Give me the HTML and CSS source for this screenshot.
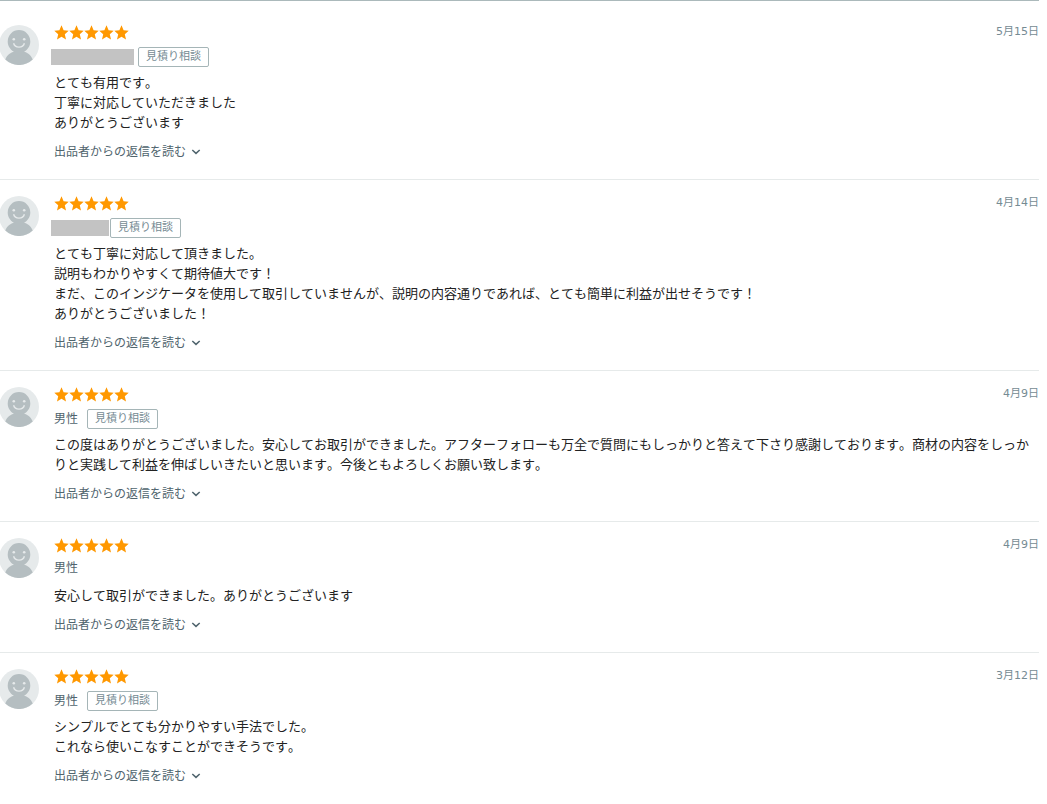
FILE: index.html
```
<!DOCTYPE html>
<html lang="ja">
<head>
<meta charset="utf-8">
<title>評価・感想</title>
<link rel="stylesheet" href="styles.css">
</head>
<body>
<svg class="sprite" aria-hidden="true">
  <symbol id="avatar" viewBox="0 0 40 40">
    <circle cx="20" cy="20" r="20" fill="#e6eaeb"/>
    <path d="M6.300 34.600C8.200 29.500 12 27.600 15 26.600C11.300 24.600 8.700 21 8.700 16.400a11.300 11.300 0 0 1 22.600 0C31.300 21 28.700 24.600 25 26.600C28 27.600 31.800 29.500 33.700 34.600A20 20 0 0 1 6.300 34.600Z" fill="#b5bec1"/>
    <circle cx="14.800" cy="14.300" r="1.300" fill="#e6eaeb"/>
    <circle cx="25.200" cy="14.300" r="1.300" fill="#e6eaeb"/>
    <path d="M14.600 18.200c.8 2.700 2.800 3.900 5.400 3.900s4.600-1.200 5.400-3.900" fill="none" stroke="#e6eaeb" stroke-width="1.400"/>
  </symbol>
  <symbol id="stars" viewBox="0 0 75 15">
    <g fill="#ff9800">
      <path id="star" d="M7.500 .3 9.600 5.300 14.700 5.700 10.800 9.200 12 14.500 7.500 11.700 3 14.500 4.200 9.200 .3 5.700 5.400 5.300Z"/>
      <use href="#star" x="15"/><use href="#star" x="30"/><use href="#star" x="45"/><use href="#star" x="60"/>
    </g>
  </symbol>
  <symbol id="chevron" viewBox="0 0 10 6">
    <path d="M1.300 1 5 4.400 8.700 1" fill="none" stroke="currentColor" stroke-width="1.500"/>
  </symbol>
</svg>
<main class="reviews">
  <article class="review">
    <svg class="avatar" aria-hidden="true"><use href="#avatar"/></svg>
    <div class="content">
      <header class="top"><svg class="stars" role="img" aria-label="星5つ"><use href="#stars"/></svg><time class="date">5月15日</time></header>
      <div class="meta"><span class="mask mask-long"></span><span class="badge">見積り相談</span></div>
      <p class="text">とても有用です。<br>丁寧に対応していただきました<br>ありがとうございます</p>
      <button class="reply" type="button">出品者からの返信を読む<svg class="chevron" aria-hidden="true"><use href="#chevron"/></svg></button>
    </div>
  </article>
  <article class="review">
    <svg class="avatar" aria-hidden="true"><use href="#avatar"/></svg>
    <div class="content">
      <header class="top"><svg class="stars" role="img" aria-label="星5つ"><use href="#stars"/></svg><time class="date">4月14日</time></header>
      <div class="meta"><span class="mask mask-short"></span><span class="badge">見積り相談</span></div>
      <p class="text">とても丁寧に対応して頂きました。<br>説明もわかりやすくて期待値大です！<br>まだ、このインジケータを使用して取引していませんが、説明の内容通りであれば、とても簡単に利益が出せそうです！<br>ありがとうございました！</p>
      <button class="reply" type="button">出品者からの返信を読む<svg class="chevron" aria-hidden="true"><use href="#chevron"/></svg></button>
    </div>
  </article>
  <article class="review">
    <svg class="avatar" aria-hidden="true"><use href="#avatar"/></svg>
    <div class="content">
      <header class="top"><svg class="stars" role="img" aria-label="星5つ"><use href="#stars"/></svg><time class="date">4月9日</time></header>
      <div class="meta"><span class="gender">男性</span><span class="badge">見積り相談</span></div>
      <p class="text">この度はありがとうございました。安心してお取引ができました。アフターフォローも万全で質問にもしっかりと答えて下さり感謝しております。商材の内容をしっかりと実践して利益を伸ばしいきたいと思います。今後ともよろしくお願い致します。</p>
      <button class="reply" type="button">出品者からの返信を読む<svg class="chevron" aria-hidden="true"><use href="#chevron"/></svg></button>
    </div>
  </article>
  <article class="review">
    <svg class="avatar" aria-hidden="true"><use href="#avatar"/></svg>
    <div class="content">
      <header class="top"><svg class="stars" role="img" aria-label="星5つ"><use href="#stars"/></svg><time class="date">4月9日</time></header>
      <div class="meta meta-plain"><span class="gender">男性</span></div>
      <p class="text">安心して取引ができました。ありがとうございます</p>
      <button class="reply" type="button">出品者からの返信を読む<svg class="chevron" aria-hidden="true"><use href="#chevron"/></svg></button>
    </div>
  </article>
  <article class="review">
    <svg class="avatar" aria-hidden="true"><use href="#avatar"/></svg>
    <div class="content">
      <header class="top"><svg class="stars" role="img" aria-label="星5つ"><use href="#stars"/></svg><time class="date">3月12日</time></header>
      <div class="meta"><span class="gender">男性</span><span class="badge">見積り相談</span></div>
      <p class="text">シンプルでとても分かりやすい手法でした。<br>これなら使いこなすことができそうです。</p>
      <button class="reply" type="button">出品者からの返信を読む<svg class="chevron" aria-hidden="true"><use href="#chevron"/></svg></button>
    </div>
  </article>
</main>
</body>
</html>
```
FILE: styles.css
```
* {
  box-sizing: border-box;
}

body {
  margin: 0;
  background: #fff;
  color: #222;
  font-family: "DejaVu Sans", "Noto Sans CJK JP", sans-serif;
  font-size: 13px;
  font-kerning: none;
  line-height: 20px;
}

.sprite {
  display: none;
}

.reviews {
  margin-right: 8px;
  padding-top: 8px;
  border-top: 1px solid #abb9bb;
}

.review {
  display: flex;
  gap: 15px;
  padding: 16px 0 18px;
  border-bottom: 1px solid #e6eaea;
}

.review:last-child {
  border-bottom: 0;
}

.avatar {
  flex: none;
  width: 40px;
  height: 40px;
  margin-left: -1px;
}

.content {
  flex: 1;
  min-width: 0;
}

.top {
  display: flex;
  justify-content: space-between;
  height: 16px;
}

.stars {
  width: 75px;
  height: 15px;
}

.date {
  color: #768b93;
  font-size: 11px;
  line-height: 14px;
}

.meta {
  display: flex;
  align-items: center;
  height: 20px;
  margin: 6px 0;
}

.meta-plain {
  margin: 4px 0 8px;
}

.gender {
  margin-right: 9px;
  color: #4f646d;
  font-size: 12px;
  line-height: 18px;
}

.mask {
  height: 16px;
  margin-left: -3px;
  background: #c3c3c3;
}

.mask-long {
  width: 83px;
  margin-right: 4px;
}

.mask-short {
  width: 58px;
  margin-right: 1px;
}

.badge {
  padding: 0 7px;
  border: 1px solid #a5b5b7;
  border-radius: 2px;
  color: #768b93;
  font-size: 11px;
  line-height: 18px;
}

.text {
  margin: 0;
  padding-right: 8px;
}

.reply {
  display: flex;
  align-items: center;
  gap: 5px;
  margin: 10px 0 0;
  padding: 0;
  border: 0;
  background: none;
  color: #4f646d;
  font: inherit;
  font-size: 12px;
  font-kerning: none;
  line-height: 18px;
  cursor: pointer;
}

.chevron {
  width: 10px;
  height: 6px;
}
```
